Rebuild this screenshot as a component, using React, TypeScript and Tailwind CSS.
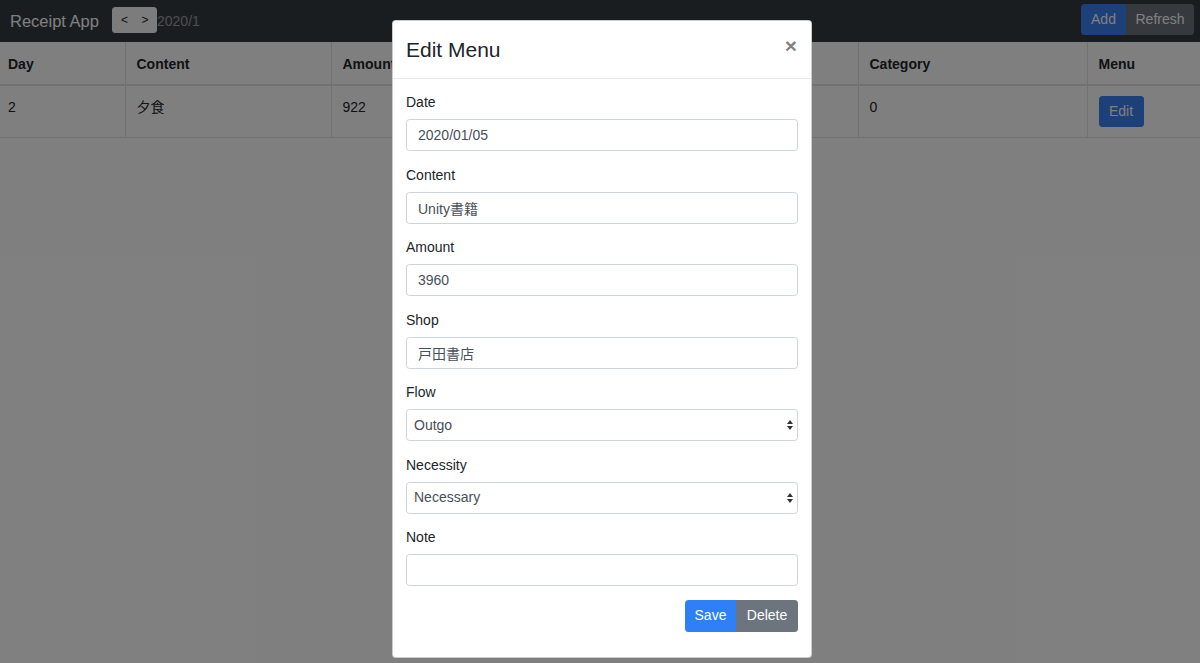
import React from "react";

const font = "font-['Liberation_Sans','Noto_Sans_CJK_JP',sans-serif]";

const columns = [
  { label: "Day", w: "w-[125px]" },
  { label: "Content", w: "w-[206px]" },
  { label: "Amount", w: "w-[139px]" },
  { label: "Shop", w: "w-[130px]" },
  { label: "Flow", w: "w-[80px]" },
  { label: "Necessity", w: "w-[80px]" },
  { label: "Note", w: "w-[98px]" },
  { label: "Category", w: "w-[229px]" },
  { label: "Menu", w: "w-[113px]" },
];

const row = ["2", "夕食", "922", "松屋", "Outgo", "Necessary", "", "0"];

function Field({ label, children }: { label: string; children: React.ReactNode }) {
  return (
    <div className="flex flex-col">
      <label className="mb-[7px] text-[14px] leading-[20px] text-[#212529]">{label}</label>
      {children}
    </div>
  );
}

function TextInput({ value }: { value: string }) {
  return (
    <input
      readOnly
      value={value}
      className="h-[32px] w-full rounded-[3.5px] border border-[#ced4da] bg-white px-[11px] text-[14px] text-[#495057] outline-none"
    />
  );
}

function Select({ value }: { value: string }) {
  return (
    <div className="relative">
      <select
        value={value}
        onChange={() => {}}
        className="h-[32px] w-full appearance-none rounded-[3.5px] border border-[#ced4da] bg-white pl-[7px] text-[14px] text-[#495057] outline-none"
      >
        <option>{value}</option>
      </select>
      <svg
        className="pointer-events-none absolute right-[4px] top-1/2 -translate-y-1/2"
        width="8"
        height="12"
        viewBox="0 0 8 12"
      >
        <path d="M4 1 L7 5 H1 Z" fill="#333" />
        <path d="M4 11 L7 7 H1 Z" fill="#333" />
      </svg>
    </div>
  );
}

export default function App() {
  return (
    <div className={`relative h-[663px] w-[1200px] overflow-hidden bg-white ${font}`}>
      {/* page behind the dialog */}
      <nav className="flex h-[42px] items-center justify-between bg-[#343a40] pl-[10px] pr-[6px]">
        <div className="flex items-center">
          <span className="mr-[13px] text-[16.5px] text-white">Receipt App</span>
          <div className="-mt-[2px] flex h-[26px] overflow-hidden rounded-[3.5px] bg-[#f8f9fa] text-[12px] text-[#212529]">
            <button className="w-[23px] pl-[2px]">&lt;</button>
            <button className="w-[22px] pr-[2px]">&gt;</button>
          </div>
          <span className="text-[14px] text-white/50">2020/1</span>
        </div>
        <div className="-mt-[3px] flex h-[31px] overflow-hidden rounded-[3.5px] text-[14px] text-white">
          <button className="w-[45px] bg-[#3a80f0]">Add</button>
          <button className="w-[68px] bg-[#6c757d]">Refresh</button>
        </div>
      </nav>

      <table className="w-full table-fixed border-collapse text-[14px] text-[#212529]">
        <thead>
          <tr className="h-[43px]">
            {columns.map((c, i) => (
              <th
                key={c.label}
                className={`${c.w} border border-t-0 border-b-2 border-[#dee2e6] pt-[2px] text-left align-middle font-bold ${
                  i === 0 ? "border-l-0 pl-[8px]" : "pl-[11px]"
                } ${i === columns.length - 1 ? "border-r-0" : ""}`}
              >
                {c.label}
              </th>
            ))}
          </tr>
        </thead>
        <tbody>
          <tr className="h-[52px]">
            {row.map((v, i) => (
              <td
                key={i}
                className={`border border-[#dee2e6] pt-[11px] align-top ${i === 0 ? "border-l-0 pl-[8px]" : "pl-[11px]"}`}
              >
                {v}
              </td>
            ))}
            <td className="border border-r-0 border-[#dee2e6] pl-[11px] pt-[10px] align-top">
              <button className="h-[31px] w-[45px] rounded-[3.5px] bg-[#3a80f0] text-white">Edit</button>
            </td>
          </tr>
        </tbody>
      </table>

      {/* backdrop */}
      <div className="absolute inset-0 bg-black/50" />

      {/* dialog */}
      <div className="absolute inset-0 flex justify-center pl-[4px] pt-[20px]">
        <div className="h-[638px] w-[420px] rounded-[4px] border border-black/20 bg-white">
          <div className="flex h-[58px] items-center justify-between border-b border-[#e9ecef] px-[13px]">
            <h4 className="text-[21px] font-medium text-[#212529]">Edit Menu</h4>
            <span className="-mt-[8px] mr-[1px] text-[21px] font-bold leading-none text-black/50">×</span>
          </div>
          <div className="flex flex-col gap-[13.5px] px-[13px] pt-[13px]">
            <Field label="Date">
              <TextInput value="2020/01/05" />
            </Field>
            <Field label="Content">
              <TextInput value="Unity書籍" />
            </Field>
            <Field label="Amount">
              <TextInput value="3960" />
            </Field>
            <Field label="Shop">
              <TextInput value="戸田書店" />
            </Field>
            <Field label="Flow">
              <Select value="Outgo" />
            </Field>
            <Field label="Necessity">
              <Select value="Necessary" />
            </Field>
            <Field label="Note">
              <TextInput value="" />
            </Field>
            <div className="flex justify-end">
              <div className="flex h-[32px] overflow-hidden rounded-[3.5px] text-[14px] text-white">
                <button className="w-[51px] bg-[#2f80f7]">Save</button>
                <button className="w-[62px] bg-[#6c757d]">Delete</button>
              </div>
            </div>
          </div>
        </div>
      </div>
    </div>
  );
}
